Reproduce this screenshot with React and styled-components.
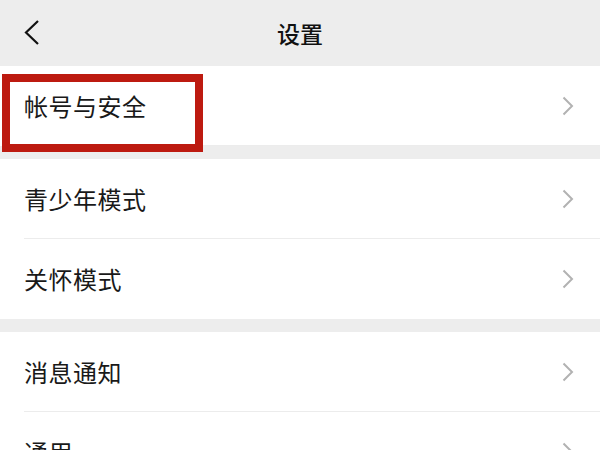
import React from "react";
import styled, { createGlobalStyle } from "styled-components";

const Global = createGlobalStyle`
  html, body { margin: 0; padding: 0; background: #ededed; }
  body { font-family: "Noto Sans CJK SC", "Noto Sans", sans-serif; overflow: hidden; }
`;

const Page = styled.div`
  width: 600px;
  height: 450px;
  background: #ededed;
  overflow: hidden;
`;

const Header = styled.div`
  height: 66px;
  display: grid;
  grid-template-columns: 80px 1fr 80px;
  align-items: center;
  background: #ededed;
`;

const Back = styled.div`
  display: flex;
  align-items: center;
  padding-left: 24px;
`;

const Title = styled.div`
  text-align: center;
  font-size: 23px;
  font-weight: 500;
  color: #111;
  line-height: 1;
`;

const Group = styled.div`
  background: #fff;
  margin-bottom: ${(p) => p.$gap}px;
  position: relative;
`;

const Row = styled.div`
  height: 80px;
  display: flex;
  align-items: center;
  justify-content: space-between;
  padding-left: 24px;
  padding-right: 26px;
  box-sizing: border-box;
  position: relative;
  &:not(:last-child)::after {
    content: "";
    position: absolute;
    left: 24px;
    right: 0;
    bottom: 0;
    height: 1px;
    background: #ececec;
  }
`;

const Label = styled.span`
  font-size: 24px;
  color: #191919;
  letter-spacing: 0.5px;
  line-height: 1;
`;

const Highlight = styled.div`
  position: absolute;
  left: 2px;
  top: 8px;
  width: 201px;
  height: 78px;
  border: 8px solid #bd1a10;
  box-sizing: border-box;
  pointer-events: none;
  z-index: 2;
`;

const Chevron = () => (
  <svg width="12" height="20" viewBox="0 0 12 20">
    <path d="M1.5 1.5 L10 10 L1.5 18.5" fill="none" stroke="#b2b2b2" strokeWidth="2" />
  </svg>
);

const BackIcon = () => (
  <svg width="16" height="26" viewBox="0 0 16 26">
    <path d="M14 1 L2 12.5 L14 24" fill="none" stroke="#111" strokeWidth="2.2" />
  </svg>
);

const Item = ({ label }) => (
  <Row>
    <Label>{label}</Label>
    <Chevron />
  </Row>
);

export default function App() {
  return (
    <Page>
      <Global />
      <Header>
        <Back>
          <BackIcon />
        </Back>
        <Title>设置</Title>
        <div />
      </Header>
      <Group $gap={13}>
        <Item label="帐号与安全" />
        <Highlight />
      </Group>
      <Group $gap={13}>
        <Item label="青少年模式" />
        <Item label="关怀模式" />
      </Group>
      <Group $gap={0}>
        <Item label="消息通知" />
        <Item label="通用" />
      </Group>
    </Page>
  );
}
